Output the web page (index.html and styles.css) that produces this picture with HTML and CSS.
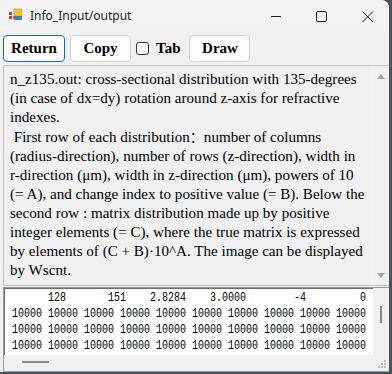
FILE: index.html
```html
<!DOCTYPE html>
<html>
<head>
<meta charset="utf-8">
<link rel="stylesheet" href="styles.css">
</head>
<body>
<div class="window">
  <div class="titlebar">
    <svg class="appicon" width="14" height="14" viewBox="0 0 14 14">
      <rect x="0" y="4" width="3" height="3" fill="#d9372b"/>
      <rect x="0" y="8" width="3" height="3" fill="#d9372b"/>
      <rect x="4" y="8" width="3" height="3" fill="#e05a3c"/>
      <rect x="5" y="1" width="8" height="7" fill="#f4c430" stroke="#c89a10" stroke-width="0.6"/>
      <rect x="5" y="8" width="8" height="4" fill="#3a7bd5"/>
    </svg>
    <span class="title">Info_Input/output</span>
    <div class="controls">
      <svg class="ctl" width="46" height="30" viewBox="0 0 46 30"><line x1="20" y1="15.5" x2="30" y2="15.5" stroke="#1a1a1a" stroke-width="1"/></svg>
      <svg class="ctl" width="46" height="30" viewBox="0 0 46 30"><rect x="19.5" y="10.5" width="10" height="10" rx="1.5" fill="none" stroke="#1a1a1a" stroke-width="1"/></svg>
      <svg class="ctl" width="46" height="30" viewBox="0 0 46 30"><path d="M19.5 10.5 L30 21 M30 10.5 L19.5 21" stroke="#1a1a1a" stroke-width="1"/></svg>
    </div>
  </div>
  <div class="toolbar">
    <button class="btn btn-focus">Return</button>
    <button class="btn">Copy</button>
    <label class="check"><span class="box"></span><span class="check-label">Tab</span></label>
    <button class="btn btn-draw">Draw</button>
  </div>
  <div class="info">
    <div class="info-text">n_z135.out: cross-sectional distribution with 135-degrees<br>(in case of dx=dy) rotation around z-axis for refractive<br>indexes.<br>&nbsp;First row of each distribution<span class="cjk">：</span>number of columns<br>(radius-direction), number of rows (z-direction), width in<br>r-direction (μm), width in z-direction (μm), powers of 10<br>(= A), and change index to positive value (= B). Below the<br>second row : matrix distribution made up by positive<br>integer elements (= C), where the true matrix is expressed<br>by elements of (C + B)·10^A. The image can be displayed<br>by Wscnt.</div>
    <div class="vscroll">
      <span class="arrow-up"></span>
      <span class="arrow-down"></span>
    </div>
  </div>
  <div class="data">
    <div class="data-view"><pre class="data-text">      128       151    2.8284    3.0000        -4         0
10000 10000 10000 10000 10000 10000 10000 10000 10000 10000
10000 10000 10000 10000 10000 10000 10000 10000 10000 10000
10000 10000 10000 10000 10000 10000 10000 10000 10000 10000</pre></div>
    <div class="data-vscroll"><span class="vthumb"></span></div>
    <div class="data-hscroll"><span class="hthumb"></span></div>
    <div class="grip">
      <svg width="16" height="16" viewBox="0 0 16 16">
        <rect x="11" y="5" width="2" height="2" fill="#b8b8b8"/>
        <rect x="8" y="8" width="2" height="2" fill="#b8b8b8"/>
        <rect x="11" y="8" width="2" height="2" fill="#b8b8b8"/>
        <rect x="5" y="11" width="2" height="2" fill="#b8b8b8"/>
        <rect x="8" y="11" width="2" height="2" fill="#b8b8b8"/>
        <rect x="11" y="11" width="2" height="2" fill="#b8b8b8"/>
      </svg>
    </div>
  </div>
</div>
</body>
</html>
```
FILE: styles.css
```css
* { box-sizing: border-box; }
html, body { margin: 0; padding: 0; }
body {
  width: 392px;
  height: 374px;
  background: #4a5260;
  overflow: hidden;
}
.window {
  width: 389px;
  height: 372px;
  background: #f0f0f0;
  border-radius: 0 8px 0 0;
  overflow: hidden;
  display: flex;
  flex-direction: column;
}
.titlebar {
  height: 31px;
  background: #f3f3f3;
  display: flex;
  align-items: center;
  padding-left: 9px;
}
.appicon { margin-right: 7px; margin-top: -1px; }
.title {
  font-family: "Noto Sans", "Open Sans", sans-serif;
  font-size: 12px;
  color: #1a1a1a;
  flex: 1;
}
.controls { display: flex; }
.ctl { display: block; }
.toolbar {
  display: flex;
  align-items: center;
  padding: 4px 3px 0 3px;
  height: 31px;
}
.btn {
  font-family: "Liberation Serif", "Times New Roman", serif;
  font-weight: bold;
  font-size: 15px;
  color: #000;
  height: 27px;
  width: 61px;
  background: #fdfdfd;
  border: 1px solid #d0d0d0;
  border-radius: 4px;
  padding: 0;
  margin-right: 5px;
}
.btn-focus {
  width: 62px;
  border: 1px solid #0f6cbd;
  box-shadow: inset 0 0 0 1px #fdfdfd;
}
.check {
  display: flex;
  align-items: center;
  margin-right: 9px;
}
.box {
  width: 13px;
  height: 13px;
  border: 1px solid #333;
  border-radius: 3px;
  background: #fff;
  margin-right: 7px;
}
.check-label {
  font-family: "Liberation Serif", "Times New Roman", serif;
  font-weight: bold;
  font-size: 15px;
}
.info {
  margin: 3px 0 0 3px;
  height: 221px;
  display: flex;
  border: 1px solid #c4c4c4;
  border-right: none;
  background: #f0f0f0;
}
.info-text {
  flex: 1;
  font-family: "Liberation Serif", "Times New Roman", "Noto Sans CJK SC", serif;
  font-size: 15.1px;
  line-height: 19px;
  color: #000;
  padding: 4px 0 0 6px;
  white-space: nowrap;
  overflow: hidden;
  border-right: 1px solid #ffffff;
}
.cjk { font-family: "Noto Sans CJK SC", sans-serif; font-size: 14px; }
.vscroll {
  width: 16px;
  position: relative;
  background: #f0f0f0;
}
.arrow-up, .arrow-down {
  position: absolute;
  left: 4px;
  width: 0;
  height: 0;
  border-left: 4px solid transparent;
  border-right: 4px solid transparent;
}
.arrow-up { top: 8px; border-bottom: 5px solid #a3a3a3; }
.arrow-down { bottom: 7px; border-top: 5px solid #a3a3a3; }
.data {
  margin: 1px 0 0 3px;
  height: 85px;
  display: grid;
  grid-template-columns: 1fr 16px;
  grid-template-rows: 1fr 16px;
  border: 1px solid #9a9a9a;
  border-right: none;
  box-shadow: inset 1px 1px 0 #6e6e6e;
  background: #f0f0f0;
}
.data-view {
  background: #fff;
  margin: 1px 0 0 1px;
  padding: 1px 0 0 7px;
  overflow: hidden;
}
.data-text {
  margin: 0;
  font-family: "Liberation Mono", "DejaVu Sans Mono", monospace;
  font-size: 13px;
  line-height: 16px;
  color: #000;
  transform: scaleX(0.7692);
  transform-origin: 0 0;
}
.data-vscroll {
  position: relative;
  background: #f0f0f0;
}
.vthumb {
  position: absolute;
  left: 7px;
  top: 18px;
  width: 2px;
  height: 17px;
  background: #8a8a8a;
}
.data-hscroll {
  position: relative;
  background: #f0f0f0;
}
.hthumb {
  position: absolute;
  left: 18px;
  top: 6px;
  width: 27px;
  height: 2px;
  background: #8a8a8a;
}
.grip { background: #f0f0f0; }
.grip svg { display: block; }
```
